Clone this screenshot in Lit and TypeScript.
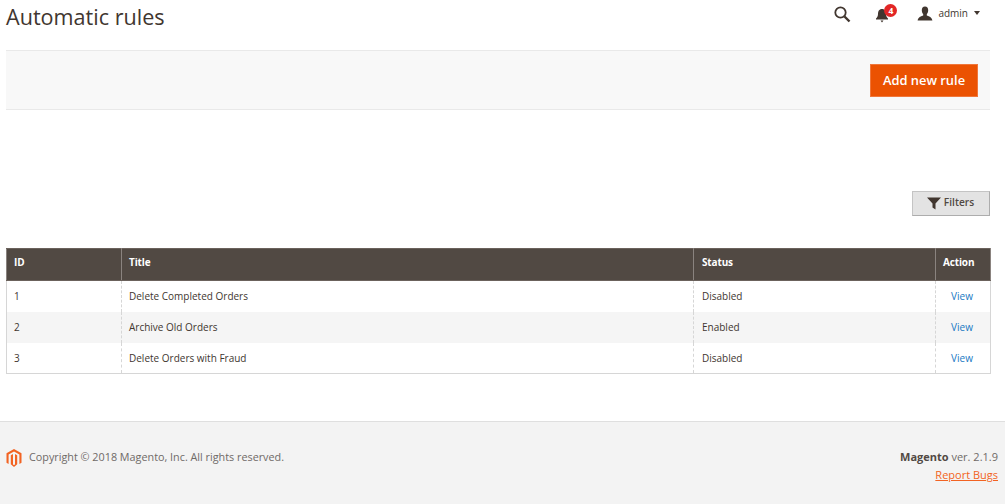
import { LitElement, html, css, svg } from "lit";
import { customElement } from "lit/decorators.js";

const rows = [
  ["1", "Delete Completed Orders", "Disabled"],
  ["2", "Archive Old Orders", "Enabled"],
  ["3", "Delete Orders with Fraud", "Disabled"],
];

@customElement("app-root")
export class AppRoot extends LitElement {
  static styles = css`
    :host { display: block; width: 1005px; height: 504px; overflow: hidden; background: #fff; font-family: "Open Sans", "Liberation Sans", sans-serif; color: #41362f; }
    .page { display: flex; flex-direction: column; height: 504px; }
    .top { height: 50px; flex: none; display: flex; justify-content: space-between; padding: 0 25px 0 6px; box-sizing: border-box; }
    h1 { margin: 0; font-size: 21.6px; font-weight: 400; line-height: 34px; color: #41362f; }
    .tools { display: flex; align-items: flex-start; padding-top: 5px; }
    .search { margin-right: 24px; }
    .bell { position: relative; width: 14px; height: 16px; margin-right: 28px; margin-top: 1px; }
    .badge { position: absolute; left: 9px; top: -2px; width: 13px; height: 13px; border-radius: 50%; background: #e22626; color: #fff; font-size: 8.5px; font-weight: 700; line-height: 13px; text-align: center; }
    .user { display: flex; align-items: center; font-size: 10px; color: #41362f; height: 16px; }
    .user svg { margin-right: 5px; }
    .caret { width: 0; height: 0; border: 3px solid transparent; border-top: 4px solid #41362f; border-bottom: 0; margin-left: 6px; }
    .bar { flex: none; height: 60px; width: 984px; margin-left: 6px; box-sizing: border-box; background: #f8f8f8; border-top: 1px solid #e9e9e9; border-bottom: 1px solid #e9e9e9; display: flex; justify-content: flex-end; align-items: center; padding-right: 12px; }
    .add { width: 108px; height: 33px; box-sizing: border-box; background: #eb5202; border: 1px solid #f0763a; color: #fff; font-family: inherit; font-size: 12.9px; font-weight: 600; padding: 0 0 1px; margin-top: 1px; }
    .filter-row { flex: none; display: flex; justify-content: flex-end; padding: 81px 15px 0 0; }
    .filters { width: 78px; height: 25px; box-sizing: border-box; background: #e3e3e3; border: 1px solid #adadad; border-color: #c4c4c4 #adadad #adadad #c4c4c4; color: #514943; font-family: inherit; font-size: 10.2px; font-weight: 600; display: flex; align-items: center; justify-content: center; gap: 3px; padding: 0 1px 4px 0; }
    .filters svg { margin-top: 3px; }
    table { margin: 32px 0 0 6px; width: 984px; border-collapse: collapse; table-layout: fixed; font-size: 10px; flex: none; }
    th { height: 32px; padding: 0 7px 5px; box-sizing: border-box; background: #514943; color: #fff; font-size: 10px; letter-spacing: -0.15px; font-weight: 700; text-align: left; border: 1px solid #8a837f; border-top-color: #6b625c; border-bottom-color: #6b625c; }
    td { height: 31px; padding: 0 7px; box-sizing: border-box; color: #41362f; border-left: 1px dashed #d6d6d6; border-right: 1px dashed #d6d6d6; }
    td:first-child { border-left: 1px solid #d6d6d6; }
    td:last-child { border-right: 1px solid #d6d6d6; text-align: center; padding: 0 2px 0 0; }
    tr:last-child td { border-bottom: 1px solid #d6d6d6; }
    tr.alt td { background: #f5f5f5; }
    th:nth-child(3), td:nth-child(3) { padding-left: 8px; }
    a.view { color: #1979c3; text-decoration: none; }
    footer { flex: none; margin-top: 47px; height: 84px; background: #f3f3f3; border-top: 1px solid #dfdfdf; box-sizing: border-box; display: flex; justify-content: space-between; padding: 25px 7px 0 6px; font-size: 10.8px; color: #6f6a67; }
    .copy { display: flex; align-items: flex-start; gap: 7px; line-height: 20px; }
    .copy svg { margin-top: 2px; }
    .ver { text-align: right; line-height: 18px; margin-top: 1px; font-size: 11px; }
    .ver b { color: #514943; }
    .ver a { color: #f26322; text-decoration: underline; display: block; }
  `;

  render() {
    return html`<div class="page">
      <div class="top">
        <h1>Automatic rules</h1>
        <div class="tools">
          <svg class="search" width="18" height="18" viewBox="0 0 18 18" fill="none" stroke="#41362f"><circle cx="7.5" cy="7.5" r="5.2" stroke-width="1.8"/><path d="M11.5 11.5 L16.5 16.5" stroke-width="2.4"/></svg>
          <div class="bell">
            <svg width="14" height="16" viewBox="0 0 14 16" fill="#41362f"><path d="M7 2 C4 2 3 4.5 3 7 C3 9.5 2 10.5 1 11.5 L1 12.5 L13 12.5 L13 11.5 C12 10.5 11 9.5 11 7 C11 4.5 10 2 7 2 Z"/><path d="M5.5 13.5 H8.5 L7 15.5 Z"/></svg>
            <span class="badge">4</span>
          </div>
          <div class="user">
            <svg width="16" height="15" viewBox="0 0 16 15" fill="#41362f"><path d="M8 0.5 C5.8 0.5 4.8 2 4.8 4.2 C4.8 6.2 5.6 7.4 6.2 8.2 L6.2 9.6 C4.6 10.4 1.2 10.8 0.6 14.5 L15.4 14.5 C14.8 10.8 11.4 10.4 9.8 9.6 L9.8 8.2 C10.4 7.4 11.2 6.2 11.2 4.2 C11.2 2 10.2 0.5 8 0.5 Z"/></svg>
            admin<span class="caret"></span>
          </div>
        </div>
      </div>
      <div class="bar"><button class="add">Add new rule</button></div>
      <div class="filter-row">
        <button class="filters">
          <svg width="14" height="13" viewBox="0 0 14 13" fill="#41362f"><path d="M0 0.5 H14 L8.5 6.5 V12.5 L5.5 10.5 V6.5 Z"/></svg>
          Filters
        </button>
      </div>
      <table>
        <colgroup><col style="width:115px"/><col style="width:572px"/><col style="width:242px"/><col style="width:55px"/></colgroup>
        <thead><tr><th>ID</th><th>Title</th><th>Status</th><th>Action</th></tr></thead>
        <tbody>
          ${rows.map((r, i) => html`<tr class=${i === 1 ? "alt" : ""}>
            <td>${r[0]}</td><td>${r[1]}</td><td>${r[2]}</td><td><a class="view">View</a></td>
          </tr>`)}
        </tbody>
      </table>
      <footer>
        <div class="copy">
          <svg width="16" height="18" viewBox="0 0 16 18" fill="#f26322">${svg`<path d="M8 0 L15.5 4.3 V13.7 L13.4 14.9 V5.5 L8 2.4 L2.6 5.5 V14.9 L0.5 13.7 V4.3 Z"/><path d="M7 4.9 V15.4 L8 16 L9 15.4 V4.9 L11.2 6.2 V15.2 L8 18 L4.8 15.2 V6.2 Z"/>`}</svg>
          <span>Copyright © 2018 Magento, Inc. All rights reserved.</span>
        </div>
        <div class="ver">
          <b>Magento</b> ver. 2.1.9
          <a>Report Bugs</a>
        </div>
      </footer>
    </div>`;
  }
}
